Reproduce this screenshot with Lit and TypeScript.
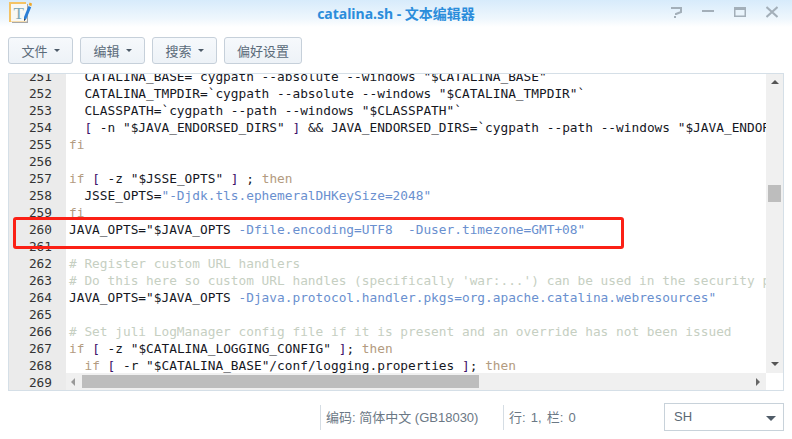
import { LitElement, html, css, svg } from "lit";
import { customElement } from "lit/decorators.js";

type Seg = [string, string];
const d = "d", k = "k", b = "b", c = "c", p = "p";
const lines: Seg[][] = [
  [[d, '  CATALINA_BASE=`cygpath --absolute --windows "$CATALINA_BASE"`']],
  [[d, '  CATALINA_TMPDIR=`cygpath --absolute --windows "$CATALINA_TMPDIR"`']],
  [[d, '  CLASSPATH=`cygpath --path --windows "$CLASSPATH"`']],
  [[d, '  '], [p, '['], [d, ' -n "$JAVA_ENDORSED_DIRS" '], [p, ']'], [d, ' && JAVA_ENDORSED_DIRS=`cygpath --path --windows "$JAVA_ENDORSED_DIRS"`']],
  [[k, 'fi']],
  [],
  [[k, 'if'], [d, ' '], [p, '['], [d, ' -z "$JSSE_OPTS" '], [p, ']'], [d, ' ; '], [k, 'then']],
  [[d, '  JSSE_OPTS='], [b, '"-Djdk.tls.ephemeralDHKeySize=2048"']],
  [[k, 'fi']],
  [[d, 'JAVA_OPTS="$JAVA_OPTS '], [b, '-Dfile.encoding=UTF8  -Duser.timezone=GMT+08"']],
  [],
  [[c, '# Register custom URL handlers']],
  [[c, "# Do this here so custom URL handles (specifically 'war:...') can be used in the security policy"]],
  [[d, 'JAVA_OPTS="$JAVA_OPTS '], [b, '-Djava.protocol.handler.pkgs=org.apache.catalina.webresources"']],
  [],
  [[c, '# Set juli LogManager config file if it is present and an override has not been issued']],
  [[k, 'if'], [d, ' '], [p, '['], [d, ' -z "$CATALINA_LOGGING_CONFIG" '], [p, ']'], [d, '; '], [k, 'then']],
  [[d, '  '], [k, 'if'], [d, ' '], [p, '['], [d, ' -r "$CATALINA_BASE"/conf/logging.properties '], [p, ']'], [d, '; '], [k, 'then']],
  [],
];

const logo = svg`
  <rect x="3" y="4" width="16" height="19" fill="#a8a8a8" />
  <rect x="0" y="2" width="17" height="20" fill="#f4c365" />
  <rect x="2" y="4" width="16" height="17.5" fill="#f8f8f5" />
  <text x="4.5" y="19" font-family="Liberation Serif, serif" font-size="17" fill="#7fa9b8">T</text>
  <path d="M15 17 L19.5 6 L22.2 7.2 L17.5 18.5 L15 21 Z" fill="#2d7fd6" />
  <path d="M19.8 5 L20.6 2.5 L23 3.5 L22.4 6.2 Z" fill="#f0a828" />
  <path d="M15 18.5 L16.8 19.4 L15 21 Z" fill="#444" />
`;

@customElement("app-root")
export class AppRoot extends LitElement {
  static styles = css`
    :host {
      display: block;
      width: 792px;
      height: 439px;
      background: #fff;
      font-family: "Liberation Sans", "Noto Sans CJK SC", sans-serif;
      overflow: hidden;
    }
    .app { display: flex; flex-direction: column; height: 439px; }
    .titlebar {
      height: 27px;
      flex: none;
      display: grid;
      grid-template-columns: 1fr auto 1fr;
      align-items: center;
      background: linear-gradient(#d7ebfb, #eff7fd 70%, #ffffff);
      padding: 0 0 0 9px;
    }
    .logo { width: 33px; height: 26px; display: block; align-self: start; }
    .title {
      font-size: 14px;
      font-weight: bold;
      color: #2b8ddb;
      margin-top: -2px;
      font-family: "Noto Sans", "Noto Sans CJK SC", sans-serif;
      padding-right: 9px;
    }
    .win { display: flex; justify-content: flex-end; gap: 20px; padding-right: 14px; margin-top: -3px; }
    .win svg { width: 12px; height: 12px; display: block; }
    .toolbar { display: flex; gap: 7px; padding: 10px 0 0 8px; height: 36px; flex: none; }
    .btn {
      height: 27px;
      box-sizing: border-box;
      border: 1px solid #c6d0da;
      border-radius: 3px;
      background: linear-gradient(#f6f9fc, #edf2f7);
      color: #5b6b7a;
      font-size: 13px;
      display: flex;
      align-items: center;
      justify-content: center;
      gap: 6px;
      width: 65px;
      font-family: "Noto Sans CJK SC", sans-serif;
    }
    .btn.wide { width: 78px; }
    .caret { width: 0; height: 0; border: 3px solid transparent; border-top: 3px solid #4c5a68; border-bottom: 0; }
    .frame {
      margin: 0 8px;
      height: 318px;
      flex: none;
      box-sizing: border-box;
      border: 1px solid #d5dfe7;
      position: relative;
      background: #fff;
      display: flex;
    }
    .viewport { overflow: hidden; flex: 1; }
    .inner { display: flex; margin-top: -6px; align-items: flex-start; }
    .gutter {
      flex: none;
      width: 57px;
      height: 340px;
      background: #ebebeb;
      color: #333;
      text-align: right;
      box-sizing: border-box;
      padding-right: 14px;
    }
    .code {
      flex: none;
      width: 700px;
      padding-left: 3px;
      box-sizing: border-box;
      overflow: hidden;
    }
    .gutter, .code {
      font: 12.8px/17px "DejaVu Sans Mono", monospace;
    }
    .line { height: 17px; white-space: pre; }
    .d { color: #16181f; }
    .k { color: #b39b80; }
    .b { color: #6a90cf; }
    .c { color: #c6cfc2; }
    .p { color: #3c1068; }
    .vbar {
      position: absolute;
      top: 0; right: 0; bottom: 17px;
      width: 17px;
      background: #f0f0f0;
    }
    .vthumb { position: absolute; left: 2px; right: 2px; top: 111px; height: 17px; background: #bdbdbd; }
    .hbar {
      position: absolute;
      left: 57px; right: 17px; bottom: 0;
      height: 17px;
      background: #f0f0f0;
    }
    .hthumb { position: absolute; left: 16px; width: 397px; top: 2px; height: 13px; background: #bdbdbd; }
    .corner { position: absolute; right: 0; bottom: 0; width: 17px; height: 17px; background: #fff; }
    .ar { position: absolute; width: 0; height: 0; border: 4px solid transparent; }
    .up { left: 5px; top: 6px; border-top: 0; border-bottom: 4px solid #555; }
    .down { left: 5px; bottom: 7px; border-bottom: 0; border-top: 4px solid #555; }
    .left { left: 5px; top: 5px; border-left: 0; border-right: 4px solid #999; }
    .right { right: 6px; top: 5px; border-right: 0; border-left: 4px solid #666; }
    .mark {
      position: absolute;
      left: 4px; top: 143px;
      width: 605px; height: 26px;
      border: 3px solid #fb2015;
      border-radius: 3px;
    }
    .status {
      display: flex;
      align-items: center;
      padding: 12px 8px 0 320px;
      font-size: 13px;
      color: #6b7885;
      font-family: "Liberation Sans", "Noto Sans CJK SC", sans-serif;
    }
    .cell { border-left: 1px solid #d5dde4; height: 25px; line-height: 25px; padding-left: 5px; box-sizing: border-box; }
    .enc { width: 183px; flex: none; }
    .pos { flex: 1; word-spacing: 1.5px; }
    .select {
      width: 120px;
      height: 28px;
      box-sizing: border-box;
      border: 1px solid #c8d2da;
      display: flex;
      align-items: center;
      justify-content: space-between;
      padding: 0 0 2px 9px;
      font-size: 13px;
      color: #5a6875;
      position: relative;
    }
    .select i { width: 0; height: 0; border: 5px solid transparent; border-top: 5px solid #505c68; border-bottom: 0; margin: 4px 7px 0 0; }
  `;

  render() {
    return html`<div class="app">
      <div class="titlebar">
        <svg class="logo" viewBox="0 0 33 26">${logo}</svg>
        <div class="title">catalina.sh - 文本编辑器</div>
        <div class="win">
          <svg viewBox="0 0 12 12" fill="none" stroke="#a3afb9" stroke-width="2">
            <path d="M1 2 H11 V6 L6 8 V9" /><path d="M5 10 V12" />
          </svg>
          <svg viewBox="0 0 12 12"><rect x="0" y="4" width="12" height="2" fill="#a3afb9" /></svg>
          <svg viewBox="0 0 12 12">
            <rect x="0" y="1" width="12" height="10" fill="#a3afb9" /><rect x="1.5" y="4" width="9" height="5.5" fill="#e9f4fc" />
          </svg>
          <svg viewBox="0 0 12 12" fill="none" stroke="#a3afb9" stroke-width="2"><path d="M0.5 1 L11.5 11 M11.5 1 L0.5 11" /></svg>
        </div>
      </div>
      <div class="toolbar">
        <div class="btn">文件<span class="caret"></span></div>
        <div class="btn">编辑<span class="caret"></span></div>
        <div class="btn">搜索<span class="caret"></span></div>
        <div class="btn wide">偏好设置</div>
      </div>
      <div class="frame">
        <div class="viewport">
          <div class="inner">
            <div class="gutter">${lines.map((_, i) => html`<div class="line">${251 + i}</div>`)}</div>
            <div class="code">
              ${lines.map((l) => html`<div class="line">${l.map(([cl, t]) => html`<span class=${cl}>${t}</span>`)}</div>`)}
            </div>
          </div>
        </div>
        <div class="vbar"><span class="ar up"></span><div class="vthumb"></div><span class="ar down"></span></div>
        <div class="hbar"><span class="ar left"></span><div class="hthumb"></div><span class="ar right"></span></div>
        <div class="corner"></div>
        <div class="mark"></div>
      </div>
      <div class="status">
        <div class="cell enc">编码: 简体中文 (GB18030)</div>
        <div class="cell pos">行: 1, 栏: 0</div>
        <div class="select">SH<i></i></div>
      </div>
    </div>`;
  }
}
